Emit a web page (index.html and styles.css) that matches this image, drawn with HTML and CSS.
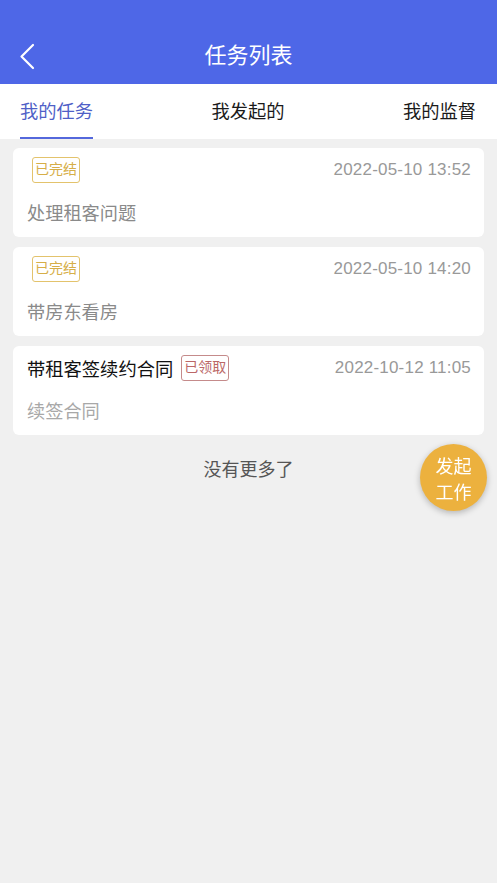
FILE: index.html
```html
<!DOCTYPE html>
<html lang="zh">
<head>
<meta charset="utf-8">
<link rel="stylesheet" href="styles.css">
</head>
<body>
<header class="topbar">
  <svg class="back" width="20" height="28" viewBox="0 0 20 28"><polyline points="14,3 2.5,14.5 14,26" fill="none" stroke="#fff" stroke-width="2.2" stroke-linecap="round" stroke-linejoin="round"/></svg>
  <h1 class="title">任务列表</h1>
</header>
<nav class="tabs">
  <div class="tab active">我的任务</div>
  <div class="tab">我发起的</div>
  <div class="tab">我的监督</div>
</nav>
<main class="list">
  <section class="card">
    <div class="row">
      <span class="badge done">已完结</span>
      <span class="date">2022-05-10 13:52</span>
    </div>
    <div class="desc">处理租客问题</div>
  </section>
  <section class="card">
    <div class="row">
      <span class="badge done">已完结</span>
      <span class="date">2022-05-10 14:20</span>
    </div>
    <div class="desc">带房东看房</div>
  </section>
  <section class="card">
    <div class="row">
      <span class="name">带租客签续约合同</span>
      <span class="badge taken">已领取</span>
      <span class="date">2022-10-12 11:05</span>
    </div>
    <div class="desc light">续签合同</div>
  </section>
  <p class="nomore">没有更多了</p>
</main>
<button class="fab">发起<br>工作</button>
</body>
</html>
```
FILE: styles.css
```css
* { box-sizing: border-box; }
html, body { margin: 0; padding: 0; }
body {
  background: #f0f0f0;
  font-family: "Liberation Sans", "Noto Sans CJK SC", sans-serif;
  width: 497px;
  min-height: 883px;
}
.topbar {
  height: 84px;
  background: #4e67e7;
  position: relative;
  display: flex;
  align-items: flex-end;
  justify-content: center;
  padding-bottom: 13px;
}
.back {
  position: absolute;
  left: 19px;
  top: 42px;
}
.title {
  margin: 0;
  font-size: 22px;
  line-height: 30px;
  font-weight: normal;
  color: #fff;
}
.tabs {
  height: 55px;
  background: #fff;
  display: flex;
  justify-content: space-between;
  padding: 0 21px 0 20px;
}
.tab {
  font-size: 18.3px;
  line-height: 53px;
  color: #1a1a1a;
  border-bottom: 2px solid transparent;
  height: 55px;
  padding-top: 1px;
}
.tab.active {
  color: #4f5fc7;
  border-bottom-color: #5468dc;
}
.list {
  padding: 9px 13px 0;
  display: flex;
  flex-direction: column;
  gap: 10px;
}
.card {
  background: #fff;
  border-radius: 6px;
  height: 89px;
  padding: 9px 13px 0 14px;
}
.row {
  display: flex;
  align-items: center;
  height: 26px;
}
.badge {
  height: 26px;
  line-height: 22px;
  font-size: 14px;
  padding: 0 2px;
  border: 1.5px solid;
  border-radius: 3px;
}
.badge.done {
  margin-left: 5px;
  color: #d6ae48;
  border-color: #e3c36c;
}
.badge.taken {
  margin-left: 8px;
  color: #bb6767;
  border-color: #c58b8b;
}
.name {
  font-size: 18.3px;
  color: #111;
}
.date {
  margin-left: auto;
  font-size: 17px;
  letter-spacing: 0.2px;
  color: #999;
}
.desc {
  margin-top: 18px;
  font-size: 18.2px;
  line-height: 26px;
  color: #8a8a8a;
}
.desc.light { color: #a8a8a8; }
.nomore {
  margin: 12px 0 0;
  text-align: center;
  font-size: 18px;
  line-height: 26px;
  color: #555;
}
.fab {
  position: fixed;
  right: 10px;
  top: 444px;
  width: 67px;
  height: 67px;
  border-radius: 50%;
  border: none;
  background: #ecb13e;
  color: #fff;
  font-family: "Noto Sans CJK SC", sans-serif;
  font-size: 18px;
  line-height: 26px;
  padding: 0;
  box-shadow: 0 2px 6px rgba(0,0,0,0.25);
}
```
